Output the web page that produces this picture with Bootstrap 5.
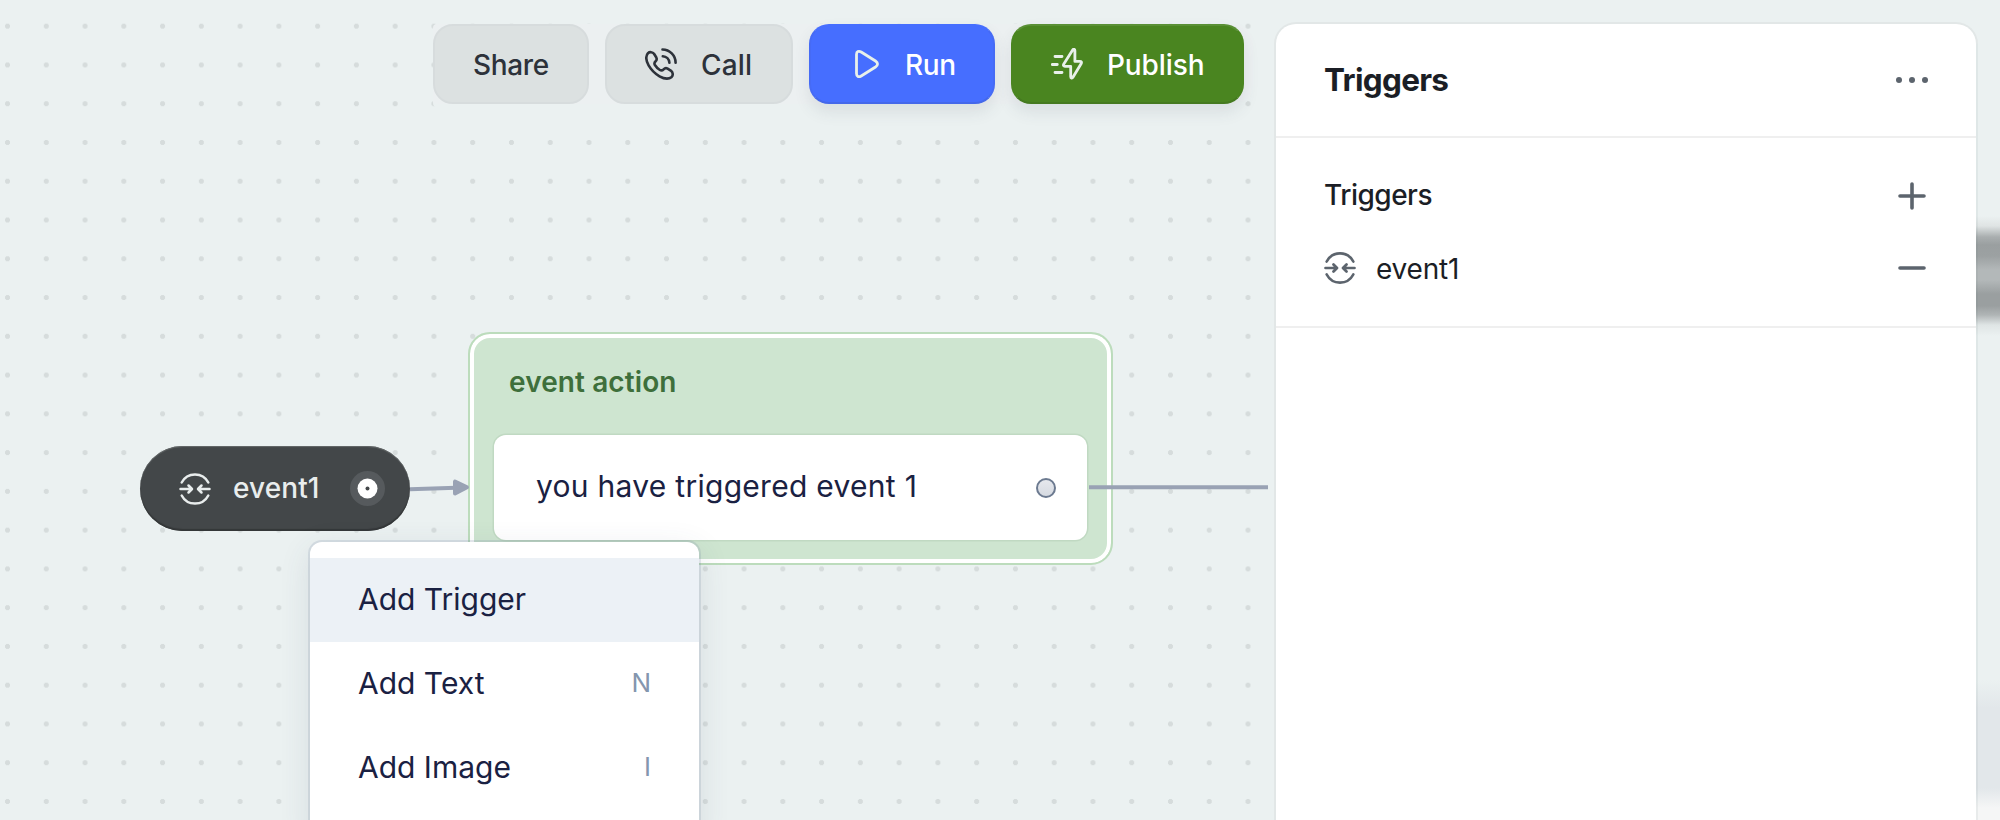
<!DOCTYPE html>
<html lang="en">
<head>
  <meta charset="UTF-8" />
  <meta name="viewport" content="width=device-width, initial-scale=1" />
  <title>Flow editor</title>
  <link href="https://cdn.jsdelivr.net/npm/bootstrap@5.3.0/dist/css/bootstrap.min.css" rel="stylesheet">
  <style>
    body {
      font-family: Inter, "Liberation Sans", sans-serif;
      background-color: #ebf1f1;
      color: #1b1e25;
      line-height: 1;
    }
    svg {
      display: block;
      flex: none;
      fill: none;
      stroke: currentColor;
      stroke-linecap: round;
      stroke-linejoin: round;
    }

    /* canvas */
    .flow-canvas {
      width: 1268px;
      background-image: radial-gradient(circle, #d6dcdc 2.2px, transparent 2.9px);
      background-size: 38.78px 38.78px;
      background-position: -11.89px 6.81px;
    }
    .flow-toolbar {
      margin: 24px 15px 0 0;
      padding-right: 9px;
      background-color: #ecf0f1;
      border-radius: 4px 20px 20px 4px;
      box-shadow: 0 3px 0 #ebf1f1;
    }
    .flow-toolbar .btn {
      height: 80px;
      padding: 2px 0 0 38px;
      border: 2px solid #d7dcdd;
      border-radius: 20px;
      background-color: #dce1e1;
      color: #2d323a;
      font-size: 28px;
      font-weight: 500;
    }
    .flow-toolbar .btn svg {
      margin: -2px 24px 0 0;
    }
    .btn-share {
      width: 156px;
      letter-spacing: -.35px;
    }
    .btn-call {
      width: 188px;
      letter-spacing: .2px;
    }
    .flow-toolbar .btn-run {
      width: 186px;
      background-color: #466eff;
      border-color: #466eff #466bf5 #4468ea;
      color: #fff;
      letter-spacing: -.4px;
      box-shadow: 0 8px 16px rgba(60, 70, 90, .1);
    }
    .flow-toolbar .btn-publish {
      width: 233px;
      background-color: #4a8520;
      border-color: #5a9035 #4a8520 #457a20;
      color: #fff;
      letter-spacing: -.1px;
      box-shadow: 0 8px 16px rgba(60, 70, 90, .1);
    }
    .btn-run svg,
    .btn-publish svg {
      color: #e8f0ea;
    }

    /* nodes */
    .event-node {
      left: 140px;
      top: 446px;
      width: 270px;
      height: 85px;
      padding: 0 25px 0 39px;
      border-radius: 43px;
      background-color: #434749;
      box-shadow: inset 0 1px 1px #666a6b, inset 0 -2px 1px #343738;
      color: #e9eded;
      font-size: 28px;
      font-weight: 500;
    }
    .event-name {
      margin: -1px auto 0 22px;
      letter-spacing: .1px;
    }
    .port-icon {
      stroke: none;
    }
    .wires {
      left: 0;
      top: 0;
      stroke: #99a2b4;
      stroke-linecap: butt;
    }
    .action-node {
      left: 468px;
      top: 332px;
      width: 645px;
      height: 233px;
      padding: 34px 24px 0;
      border: 2px solid #bcdcbc;
      border-radius: 22px;
      background-color: #cee5d0;
      box-shadow: inset 0 0 0 4px #fff;
    }
    .action-title {
      padding-left: 15px;
      font-size: 28px;
      font-weight: 600;
      letter-spacing: .1px;
      color: #3e6f3b;
    }
    .action-body {
      height: 105px;
      margin-top: 39px;
      padding: 0 31px 0 42px;
      border-radius: 12px;
      background-color: #fff;
      box-shadow: 0 0 0 1.5px #c0d9c2;
      color: #1a2142;
      font-size: 30px;
      letter-spacing: .28px;
    }
    .action-text {
      margin-top: -3px;
    }
    .action-port {
      width: 20px;
      height: 20px;
      border: 2px solid #6c7a90;
      background: linear-gradient(#e6e8ed, #d6dae1);
    }

    /* context menu */
    .flow-menu {
      left: 310px;
      top: 542px;
      width: 389px;
      height: 300px;
      padding-top: 16px;
      border-radius: 12px;
      background-color: #fff;
      box-shadow: 0 0 0 2px rgba(100, 120, 150, .16), 0 8px 32px rgba(60, 70, 100, .12);
      color: #1a2142;
    }
    .flow-item {
      height: 84px;
      padding: 0 48px 3px;
      font-size: 30px;
    }
    .flow-item.hovered {
      background-color: #ecf1f6;
    }
    .flow-key {
      font-size: 26px;
      color: #8496ae;
    }

    /* side panel */
    .side-area {
      width: 732px;
      padding: 22px 0 0 6px;
    }
    .side-panel {
      border: 2px solid #e2e7e7;
      border-bottom: 0;
      border-radius: 22px 22px 0 0;
      background-color: #fff;
    }
    .side-head,
    .side-section {
      padding: 0 48px;
      border-bottom: 2px solid #efefef;
    }
    .side-head {
      height: 114px;
    }
    .side-head h1 {
      margin: -1px 0 0;
      font-size: 31.5px;
      font-weight: 700;
      letter-spacing: -.7px;
    }
    .side-section {
      height: 190px;
      padding-top: 26px;
      font-size: 28px;
    }
    .side-row {
      height: 64px;
    }
    .side-row + .side-row {
      margin-top: 8px;
    }
    .side-label {
      margin-top: -3px;
      font-weight: 500;
      letter-spacing: -.5px;
    }
    .side-event {
      margin: 1px auto 0 20px;
      letter-spacing: -.2px;
    }
    .side-icon {
      color: #5c646d;
    }
    .side-icon.dots {
      fill: #5c646d;
      stroke: none;
    }

    /* strip of blurred canvas to the right of the panel */
    .blur-strip {
      width: 24px;
      margin: 22px 0 0 -2px;
      border-left: 2px solid rgba(90, 110, 120, .08);
      background: linear-gradient(#ebf1f1 172px, #dfe4e4 182px, #a9aeaf 193px, #9a9fa0 201px,
        #9ca1a2 212px, #b3b8b9 226px, #b3b8b9 236px, #9a9fa0 250px, #9a9fa0 262px,
        #b0b5b6 271px, #dfe5e5 281px, #ebf1f1 292px, #ebf1f1 636px,
        #e2e7ea 664px, #e2e7ea 744px, #f5f6f6 764px);
    }
  </style>
</head>
<body class="vh-100 d-flex overflow-hidden">

<svg width="0" height="0" class="position-absolute">
  <symbol id="eventIcon" viewBox="0 0 32 32">
    <path d="M2.700 9.500a15 15 0 0 1 26.600 0M2.700 22.500a15 15 0 0 0 26.600 0M1.500 16h11M9.500 12.500l3.500 3.500-3.500 3.500M30.500 16h-11M22.500 12.500l-3.500 3.500 3.500 3.500"/>
  </symbol>
</svg>

<main class="flow-canvas position-relative d-flex flex-column align-items-end flex-shrink-0">
  <div class="flow-toolbar d-flex gap-3">
    <button class="btn btn-share d-flex align-items-center">Share</button>
    <button class="btn btn-call d-flex align-items-center">
      <svg width="32" height="32" viewBox="0 0 32 32" stroke-width="2.600">
        <path d="M3 5.200c1.600-1.600 4.600-1.300 6 .6l2.200 3.500c.8 1.400.6 2.800-.6 4-1.500 1.400-1.600 2.200-.7 3.700a16 16 0 0 0 5 5c1.500.9 2.300.8 3.700-.7 1.200-1.200 2.600-1.400 4-.6l3.500 2.200c1.900 1.400 2.200 4.400.6 6-2.700 2.300-7.500 2-12.200-.6A30 30 0 0 1 3.600 17.400C1 12.700.7 7.900 3 5.200z"/>
        <path d="M17.500 1.500A13.300 13.300 0 0 1 30.600 14.700M17.800 8.200a7 7 0 0 1 6.600 6.600"/>
      </svg>
      Call
    </button>
    <button class="btn btn-run d-flex align-items-center">
      <svg width="32" height="32" viewBox="0 0 32 32" stroke-width="2.800">
        <path d="M7.500 6.500v19c0 3 2.200 4 4.700 2.500l14.300-9c2.700-1.800 2.700-4.200 0-6l-14.300-9C9.700 2.500 7.500 3.500 7.500 6.500z"/>
      </svg>
      Run
    </button>
    <button class="btn btn-publish d-flex align-items-center">
      <svg width="32" height="32" viewBox="0 0 32 32" stroke-width="2.800">
        <path d="M21.500 2.200 12.800 16c-.8 1.400-.3 2.300 1.200 2.300h5.700v10.200c0 1.800 1.400 2.200 2.400.6l8-13.400c.8-1.400.3-2.300-1.200-2.300h-5V2.800c0-1.800-1.400-2.200-2.400-.6zM4 8.500h7M1.300 16.500h5M4 24.500h7"/>
      </svg>
      Publish
    </button>
  </div>

  <div class="action-node position-absolute">
    <div class="action-title">event action</div>
    <div class="action-body d-flex align-items-center justify-content-between">
      <span class="action-text">you have triggered event 1</span>
      <span class="action-port rounded-circle"></span>
    </div>
  </div>

  <svg class="wires position-absolute" width="1268" height="820" stroke-width="4">
    <path d="M410 489.200 456 487.800M1089 487.200H1268"/>
    <path d="M455 481.500v12l12-6.200z" fill="#99a2b4"/>
  </svg>

  <div class="event-node position-absolute d-flex align-items-center">
    <svg width="32" height="32" stroke-width="2.500"><use href="#eventIcon"/></svg>
    <span class="event-name">event1</span>
    <svg class="port-icon" width="35" height="35">
      <circle cx="17.500" cy="17.500" r="17.500" fill="#565a5d"/>
      <circle cx="17.500" cy="17.500" r="10" fill="#fff"/>
      <circle cx="17.500" cy="17.500" r="2" fill="#434749"/>
    </svg>
  </div>

  <div class="flow-menu position-absolute overflow-hidden">
    <div class="flow-item hovered d-flex align-items-center">Add Trigger</div>
    <div class="flow-item d-flex align-items-center justify-content-between">Add Text <span class="flow-key">N</span></div>
    <div class="flow-item d-flex align-items-center justify-content-between">Add Image <span class="flow-key">I</span></div>
  </div>
</main>

<aside class="side-area d-flex flex-shrink-0">
  <div class="side-panel flex-grow-1">
    <div class="side-head d-flex align-items-center justify-content-between">
      <h1>Triggers</h1>
      <svg class="side-icon dots" width="32" height="32">
        <circle cx="3" cy="16" r="3"/><circle cx="16" cy="16" r="3"/><circle cx="29" cy="16" r="3"/>
      </svg>
    </div>
    <div class="side-section">
      <div class="side-row d-flex align-items-center justify-content-between">
        <span class="side-label">Triggers</span>
        <svg class="side-icon" width="32" height="32" stroke-width="3.600"><path d="M16 4v24M4 16h24"/></svg>
      </div>
      <div class="side-row d-flex align-items-center">
        <svg class="side-icon" width="32" height="32" stroke-width="2.700"><use href="#eventIcon"/></svg>
        <span class="side-event">event1</span>
        <svg class="side-icon" width="32" height="32" stroke-width="3.600"><path d="M4 16h24"/></svg>
      </div>
    </div>
  </div>
  <div class="blur-strip"></div>
</aside>

<script src="https://cdn.jsdelivr.net/npm/bootstrap@5.3.0/dist/js/bootstrap.bundle.min.js"></script>
</body>
</html>
